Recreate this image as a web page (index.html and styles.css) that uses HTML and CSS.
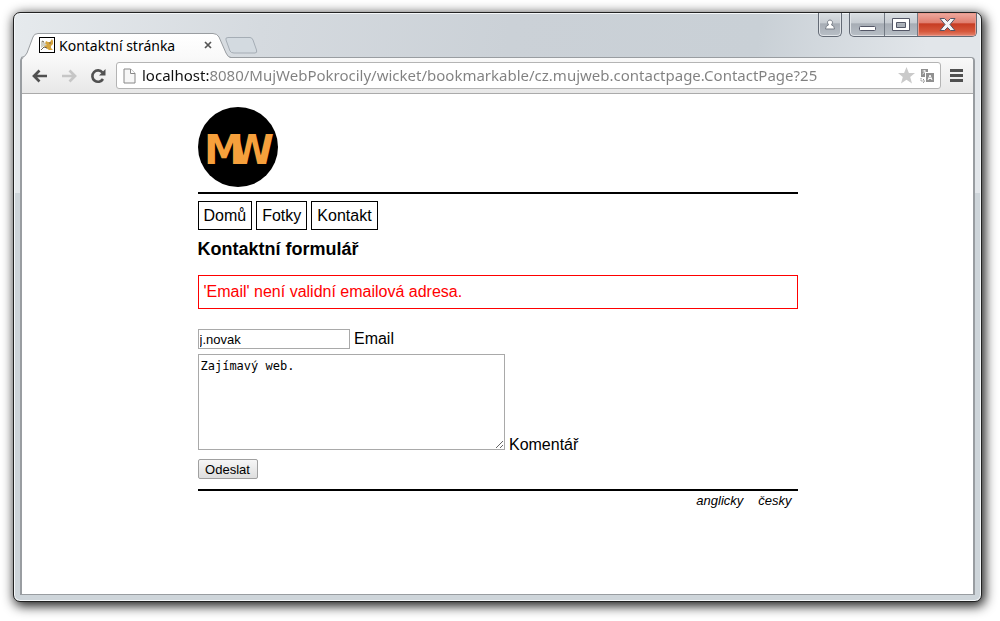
FILE: index.html
```
<!DOCTYPE html>
<html lang="cs">
<head>
    <meta charset="UTF-8">
    <meta name="viewport" content="width=device-width, initial-scale=1.0">
    <title>Kontaktní stránka</title>
    <link rel="stylesheet" href="styles.css">
</head>
<body>
    <div class="window">
        <header class="titlebar">
            <div class="tabs">
                <div class="tab">
                    <svg class="tab-shape" width="210" height="25" viewBox="0 0 210 25">
                        <defs>
                            <linearGradient id="tabFill" x1="0" y1="0" x2="0" y2="1">
                                <stop offset="0" stop-color="#fff"/>
                                <stop offset="1" stop-color="#f9f9f9"/>
                            </linearGradient>
                        </defs>
                        <path d="M0 25 Q4 25 6 20 L12 4 Q13 .5 17 .5 H192 Q196 .5 198 4 L205 20 Q207 24.500 210 25 Z" fill="url(#tabFill)"/>
                        <path d="M0 24.500 Q4 24.500 6 20 L12 4 Q13 .5 17 .5 H192 Q196 .5 198 4 L205 20 Q207 24.500 210 24.500" fill="none" stroke="#999da1"/>
                    </svg>
                    <svg class="favicon" width="16" height="16" viewBox="0 0 16 16">
                        <rect x=".5" y=".5" width="15" height="15" fill="#fff" stroke="#000"/>
                        <path d="M7 4l2 1h2l2-3 1 2v3l-2 2v2l2 2h-4l-3-2-2-2z" fill="#d6a43c"/>
                        <path d="M2 4l3 1 3 3-3 1-3 2z" fill="#cfcfc4"/>
                        <path d="M2 13l3-3 3 1M3 4l2 1M10 6h2" fill="none" stroke="#6b6250"/>
                    </svg>
                    <span class="tab-title">Kontaktní stránka</span>
                    <button class="tab-close" type="button" aria-label="Zavřít kartu">
                        <svg width="8" height="8" viewBox="0 0 8 8"><path d="M1 1l6 6M7 1l-6 6" stroke="#555" stroke-width="1.700"/></svg>
                    </button>
                </div>
                <button class="new-tab" type="button" aria-label="Nová karta">
                    <svg width="33" height="17" viewBox="0 0 33 17"><path d="M3 .5H25Q27 .5 28 3L31.500 13Q32.500 16 30 16H9Q6 16 5 14L1 3Q0 .5 3 .5Z" fill="#d3dae0" stroke="#a5adb5"/></svg>
                </button>
            </div>
            <div class="window-buttons">
                <button class="user-button" type="button" aria-label="Uživatel">
                    <svg width="12" height="12" viewBox="0 0 12 12"><path d="M6 1a2.500 2.500 0 0 1 2 4l-.5 1q3 .5 3 4h-9q0-3.500 3-4L4 5a2.500 2.500 0 0 1 2-4z" fill="#fff" stroke="#777d86"/></svg>
                </button>
                <div class="system-buttons">
                    <button class="minimize" type="button" aria-label="Minimalizovat">
                        <svg width="17" height="15" viewBox="0 0 17 15"><rect x=".5" y="9.500" width="16" height="4" rx="1" fill="#fff" stroke="#535666"/></svg>
                    </button>
                    <button class="maximize" type="button" aria-label="Maximalizovat">
                        <svg width="18" height="15" viewBox="0 0 18 15"><path d="M.5 1.500H17.500V13.500H.5Z M4.500 5.500H13.500V10.500H4.500Z" fill="#fff" fill-rule="evenodd" stroke="#535666"/></svg>
                    </button>
                    <button class="close" type="button" aria-label="Zavřít">
                        <svg width="17" height="15" viewBox="0 0 17 15"><path d="M1 1.500H5.500L8.500 4.500L11.500 1.500H16L11 7.500L16 13.500H11.500L8.500 10.500L5.500 13.500H1L6 7.500Z" fill="#f5f5f5" stroke="#535666" stroke-linejoin="round"/></svg>
                    </button>
                </div>
            </div>
        </header>

        <div class="browser">
            <div class="toolbar">
                <button class="tool" type="button" aria-label="Zpět">
                    <svg width="16" height="14" viewBox="0 0 16 14"><path d="M15 7H3M7.500 1.500L2 7l5.500 5.500" fill="none" stroke="#505050" stroke-width="2.700"/></svg>
                </button>
                <button class="tool" type="button" aria-label="Vpřed" disabled>
                    <svg width="16" height="14" viewBox="0 0 16 14"><path d="M1 7H13M8.500 1.500L14 7l-5.500 5.500" fill="none" stroke="#c6c6c6" stroke-width="2.700"/></svg>
                </button>
                <button class="tool" type="button" aria-label="Obnovit">
                    <svg width="16" height="16" viewBox="0 0 16 16"><path d="M12.500 4.500A5.700 5.700 0 1 0 13 11" fill="none" stroke="#505050" stroke-width="2.600"/><path d="M15.500 1V7.500H9Z" fill="#505050"/></svg>
                </button>
                <div class="address">
                    <svg width="13" height="16" viewBox="0 0 13 16"><path d="M1 1H7.500L12 5.500V15H1Z" fill="#f7f7f7" stroke="#888"/><path d="M7.500 1V5.500H12" fill="#fff" stroke="#888"/></svg>
                    <input class="url" type="text" aria-label="Adresa" value="localhost:8080/MujWebPokrocily/wicket/bookmarkable/cz.mujweb.contactpage.ContactPage?25">
                    <button class="small-tool" type="button" aria-label="Přidat záložku">
                        <svg width="17" height="17" viewBox="0 0 17 17"><path d="M8.500 0L10.900 6H17L12.200 10L14 16.500L8.500 12.700L3 16.500L4.800 10L0 6H6.100Z" fill="#cacaca"/></svg>
                    </button>
                    <button class="small-tool" type="button" aria-label="Přeložit">
                        <svg width="14" height="14" viewBox="0 0 14 14"><path d="M1 0H8V3H5V8H1Z" fill="#909090"/><path d="M2.500 2H6M4.300 1V2M5 2Q4.500 4 2.500 5" fill="none" stroke="#fff" stroke-width=".8"/><path d="M6 4H14V13H6Z" fill="#909090"/><path d="M8 11L10 6L12 11M8.700 9.500H11.300" fill="none" stroke="#fff"/><path d="M1 9V12H4M3 10L5 12L3 14" fill="none" stroke="#909090" stroke-dasharray="1.500 .7"/></svg>
                    </button>
                </div>
                <button class="tool menu" type="button" aria-label="Nabídka">
                    <svg width="13" height="13" viewBox="0 0 13 13"><path d="M0 1.500H13M0 6.500H13M0 11.500H13" stroke="#505050" stroke-width="3"/></svg>
                </button>
            </div>

            <main class="page">
                <div class="content">
                    <svg class="logo" width="80" height="80" viewBox="0 0 80 80" role="img" aria-label="MW">
                        <circle cx="40" cy="40" r="40" fill="#000"/>
                        <text class="logo-text" x="6 32" y="57">MW</text>
                    </svg>
                    <nav class="menu-links">
                        <a href="#">Domů</a>
                        <a href="#">Fotky</a>
                        <a href="#">Kontakt</a>
                    </nav>
                    <h1>Kontaktní formulář</h1>
                    <div class="error">'Email' není validní emailová adresa.</div>
                    <form>
                        <div class="form-row">
                            <input type="text" id="email" name="email" value="j.novak">
                            <label for="email">Email</label>
                        </div>
                        <div class="form-row">
                            <textarea id="comment" name="comment">Zajímavý web.</textarea>
                            <label for="comment">Komentář</label>
                        </div>
                        <button class="submit" type="submit">Odeslat</button>
                    </form>
                    <footer>
                        <a href="#">anglicky</a>
                        <a href="#">česky</a>
                    </footer>
                </div>
            </main>
        </div>
    </div>
</body>
</html>
```
FILE: styles.css
```
* {
    box-sizing: border-box;
}

body {
    display: flex;
    min-height: 100vh;
    margin: 0;
    padding: 12px 18px 19px 13px;
    background: #fff;
    font-family: "Liberation Sans", Arial, sans-serif;
    font-size: 16px;
    color: #000;
}

button {
    padding: 0;
    border: none;
    background: none;
}

svg {
    display: block;
}

.window {
    flex: 1;
    display: flex;
    flex-direction: column;
    min-width: 0;
    padding: 0 6px 6px;
    border: 1px solid #222;
    border-radius: 7px;
    background: linear-gradient(100deg, #e6eaed 0, #d5dadf 25%, #cbd1d7 50%, #c9d0d6 75%, #e2e6ea 92%) top / 100% 180px no-repeat, #ced5da;
    box-shadow: inset 0 0 0 1px #f4f7f9, 2px 3px 12px 1px rgba(0, 0, 0, 0.9);
}

/* Tab strip */
.titlebar {
    display: flex;
    justify-content: space-between;
    height: 44px;
}

.tabs {
    display: flex;
    align-items: flex-end;
}

.tab {
    position: relative;
    z-index: 1;
    display: flex;
    align-items: center;
    width: 205px;
    height: 24px;
    padding: 0 13px 0 19px;
}

.tab-shape {
    position: absolute;
    left: 1px;
    top: 0;
    z-index: -1;
}

.tab-title {
    flex: 1;
    padding-left: 4px;
    font: 14px "Noto Sans", "Open Sans", sans-serif;
    white-space: nowrap;
}

.new-tab {
    align-self: flex-end;
    margin-bottom: 3px;
}

.window-buttons {
    display: flex;
    align-items: flex-start;
    gap: 7px;
    margin-right: -2px;
}

.user-button,
.system-buttons {
    display: flex;
    height: 24px;
    border: 1px solid #636a75;
    border-top: none;
    border-radius: 0 0 5px 5px;
    background: linear-gradient(#dadfe3 0, #c6cbd1 45%, #a6acb4 46%, #b8bfc6 100%);
    box-shadow: inset 0 0 0 1px #e0e4e8;
    overflow: hidden;
}

.user-button {
    width: 24px;
    align-items: center;
    justify-content: center;
}

.system-buttons button {
    display: flex;
    align-items: center;
    justify-content: center;
    border-right: 1px solid #737a84;
}

.system-buttons .minimize {
    width: 35px;
}

.system-buttons .maximize {
    width: 33px;
}

.system-buttons .close {
    width: 58px;
    border: none;
    background: linear-gradient(#eeaaa0 0, #df7c6c 45%, #c63b22 46%, #d6583c 80%, #e48670 100%);
    box-shadow: inset 0 0 0 1px #e99a8d;
}

/* Toolbar */
.browser {
    flex: 1;
    display: flex;
    flex-direction: column;
    border: 1px solid #999da1;
    border-width: 1px 2px;
    border-radius: 4px 4px 0 0;
    background: #fff;
}

.toolbar {
    display: flex;
    align-items: center;
    height: 36px;
    padding: 0 9px;
    border-bottom: 1px solid #aaa;
    border-radius: 4px 4px 0 0;
    background: linear-gradient(#f9f9f9, #e7e7e7);
}

.tool {
    display: flex;
    justify-content: center;
    width: 29px;
}

.tool:first-child {
    width: 18px;
    margin-right: 5px;
}

.address {
    flex: 1;
    display: flex;
    align-items: center;
    gap: 5px;
    height: 27px;
    margin-left: 4px;
    padding: 0 6px;
    border: 1px solid #b4b4b4;
    border-radius: 3px;
    background: #fff;
}

/* the host is dark, the rest of the address is grey */
.url {
    flex: 1;
    min-width: 0;
    height: 25px;
    padding: 0 1px 2px;
    border: none;
    outline: none;
    background: linear-gradient(to right, #111 68px, #808080 68px);
    -webkit-background-clip: text;
    background-clip: text;
    -webkit-text-fill-color: transparent;
    font: 15px "Noto Sans", "Open Sans", sans-serif;
}

.menu {
    width: 16px;
    margin-left: 7px;
}

/* Page */
.page {
    flex: 1;
    padding: 13px 20px;
}

.content {
    max-width: 600px;
    margin: 0 auto;
}

.logo {
    margin-bottom: 5px;
}

.logo-text {
    font: bold 40px "DejaVu Sans", Verdana, sans-serif;
    fill: #f6a03c;
}

.menu-links {
    display: flex;
    gap: 4px;
    padding-top: 7px;
    border-top: 2px solid #000;
}

.menu-links a {
    padding: 5px;
    border: 1px solid #000;
    line-height: 17px;
    color: #000;
    text-decoration: none;
}

h1 {
    margin: 9px 0 15px;
    font-size: 18px;
    line-height: 21px;
}

.error {
    padding: 5px;
    border: 1px solid #f00;
    line-height: 22px;
    color: #f00;
}

form {
    padding: 20px 0 10px;
}

.form-row {
    margin-bottom: 5px;
    line-height: 18px;
}

.form-row input {
    width: 152px;
    height: 20px;
    padding: 1px;
    border: 1px solid #a9a9a9;
    font: 13px "Liberation Sans", Arial, sans-serif;
}

.form-row textarea {
    width: 307px;
    height: 96px;
    margin: 0;
    padding: 4px 2px 2px;
    border: 1px solid #a9a9a9;
    font: 12px "DejaVu Sans Mono", monospace;
}

.submit {
    display: block;
    width: 60px;
    height: 20px;
    border: 1px solid #a0a0a0;
    border-radius: 2px;
    background: linear-gradient(#f6f6f6, #dedede);
    font: 13px "Liberation Sans", Arial, sans-serif;
}

footer {
    display: flex;
    justify-content: flex-end;
    gap: 15px;
    padding: 2px 6px;
    border-top: 2px solid #000;
    font-size: 13px;
    font-style: italic;
}

footer a {
    color: #000;
    text-decoration: none;
}
```
